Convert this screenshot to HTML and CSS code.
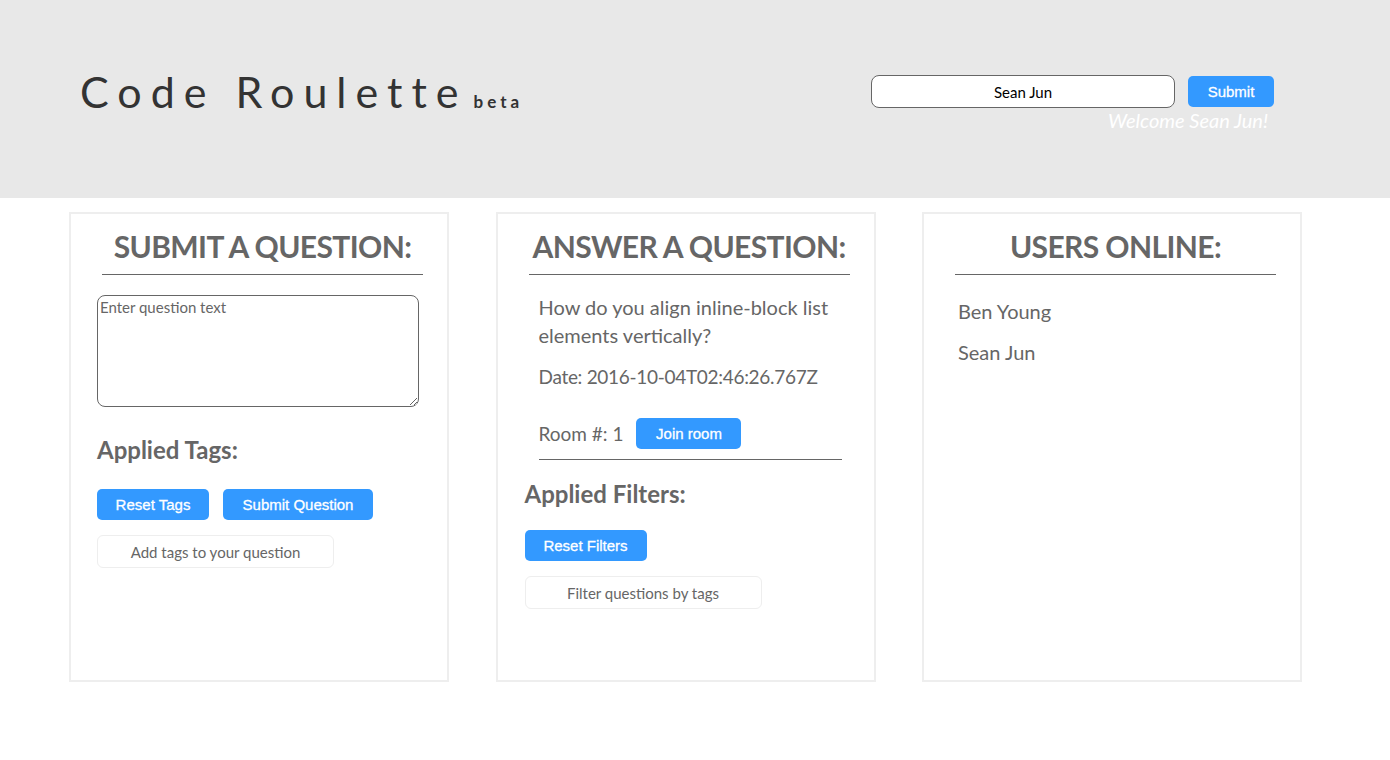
FILE: index.html
```html
<!DOCTYPE html>
<html>
<head>
<meta charset="utf-8">
<link rel="stylesheet" href="styles.css">
</head>
<body>
<header class="header">
  <h1 class="logo">Code Roulette<span class="beta">beta</span></h1>
  <div class="login">
    <div class="login-row">
      <input class="name-input" type="text" value="Sean Jun">
      <button class="btn btn-submit">Submit</button>
    </div>
    <div class="welcome">Welcome Sean Jun!</div>
  </div>
</header>
<main class="main">
  <section class="panel">
    <h2 class="panel-title">SUBMIT A QUESTION:</h2>
    <div class="panel-body p1">
      <textarea class="question-text" placeholder="Enter question text"></textarea>
      <h3 class="sub-title tags-title">Applied Tags:</h3>
      <div class="btn-row">
        <button class="btn btn-reset">Reset Tags</button>
        <button class="btn btn-sq">Submit Question</button>
      </div>
      <input class="tag-input" type="text" placeholder="Add tags to your question">
    </div>
  </section>
  <section class="panel">
    <h2 class="panel-title">ANSWER A QUESTION:</h2>
    <div class="question">
      <p class="q-text">How do you align inline-block list elements vertically?</p>
      <p class="q-date">Date: 2016-10-04T02:46:26.767Z</p>
      <div class="room-row">
        <span class="room">Room #: 1</span>
        <button class="btn btn-join">Join room</button>
      </div>
    </div>
    <div class="panel-body p2">
      <h3 class="sub-title filters-title">Applied Filters:</h3>
      <button class="btn btn-rf">Reset Filters</button>
      <input class="tag-input filter-input" type="text" placeholder="Filter questions by tags">
    </div>
  </section>
  <section class="panel">
    <h2 class="panel-title">USERS ONLINE:</h2>
    <ul class="users">
      <li>Ben Young</li>
      <li>Sean Jun</li>
    </ul>
  </section>
</main>
</body>
</html>
```
FILE: styles.css
```css
* { box-sizing: border-box; }
body {
  margin: 0;
  font-family: "Lato", "Open Sans", sans-serif;
  color: #666;
  background: #fff;
}
.header {
  height: 198px;
  background: #e8e8e8;
  display: flex;
  justify-content: space-between;
  align-items: flex-start;
  padding: 0 116px 0 80px;
}
.logo {
  margin: 66px 0 0 0;
  font-size: 43px;
  font-weight: 400;
  letter-spacing: 9px;
  color: #333;
  line-height: 52px;
}
.beta {
  font-size: 17px;
  font-weight: 700;
  letter-spacing: 4px;
  margin-left: 6px;
}
.login {
  margin-top: 75px;
  display: flex;
  flex-direction: column;
  align-items: flex-end;
}
.login-row {
  display: flex;
  align-items: center;
  gap: 13px;
}
.name-input {
  width: 304px;
  height: 33px;
  border: 1px solid #666;
  border-radius: 8px;
  text-align: center;
  font-family: "Lato", sans-serif;
  font-size: 15px;
  color: #000;
  background: #fff;
}
.btn {
  background: #3399ff;
  color: #fff;
  border: none;
  border-radius: 5px;
  font-family: "Liberation Sans", Arial, sans-serif;
  font-size: 15px;
  height: 31px;
  padding: 0;
  cursor: pointer;
  -webkit-text-stroke: 0.3px #fff;
}
.btn-submit { width: 86px; }
.welcome {
  margin-top: 0;
  margin-right: 6px;
  font-style: italic;
  color: #fff;
  font-size: 20px;
  font-weight: 400;
}
.main {
  display: flex;
  gap: 46.5px;
  padding-left: 69px;
  margin-top: 14px;
}
.panel {
  width: 380px;
  height: 470px;
  border: 2px solid #eee;
}
.panel-title {
  margin: 14px 0 0 31px;
  width: 321px;
  text-align: center;
  font-size: 30px;
  font-weight: 700;
  letter-spacing: -0.6px;
  white-space: nowrap;
  color: #666;
  line-height: 36px;
  padding-bottom: 10px;
  border-bottom: 1px solid #666;
}
.panel-body.p1 { padding: 20px 0 0 26px; }
.question-text {
  display: block;
  width: 322px;
  height: 112px;
  border: 1px solid #666;
  border-radius: 8px;
  padding: 2px;
  font-family: "Lato", sans-serif;
  font-size: 15px;
  resize: vertical;
}
.question-text::placeholder { color: #666; }
.sub-title {
  margin: 0;
  font-size: 24px;
  font-weight: 700;
  color: #666;
  line-height: 30px;
}
.tags-title { margin-top: 28px; }
.btn-row { display: flex; gap: 14px; margin-top: 24px; }
.btn-reset { width: 112px; }
.btn-sq { width: 150px; }
.tag-input {
  display: block;
  margin-top: 15px;
  width: 237px;
  height: 33px;
  border: 1px solid #eee;
  border-radius: 6px;
  text-align: center;
  font-family: "Lato", sans-serif;
  font-size: 15px;
  background: #fff;
}
.tag-input::placeholder { color: #666; }
.question { margin: 18px 0 0 41px; width: 303px; }
.q-text { margin: 0; font-size: 20px; line-height: 28px; }
.q-date {
  margin: 14px 0 0 0;
  font-size: 19px;
  letter-spacing: -0.3px;
  white-space: nowrap;
  line-height: 28px;
}
.room-row {
  display: flex;
  align-items: center;
  gap: 13px;
  margin-top: 27px;
  padding-bottom: 10px;
  border-bottom: 1px solid #666;
}
.room { font-size: 19px; }
.btn-join { width: 105px; }
.panel-body.p2 { padding: 19px 0 0 27px; }
.btn-rf { display: block; width: 122px; margin-top: 21px; }
.users {
  list-style: none;
  margin: 22px 0 0 34px;
  padding: 0;
  font-size: 20px;
}
.users li { line-height: 28px; margin-bottom: 13px; }
```
